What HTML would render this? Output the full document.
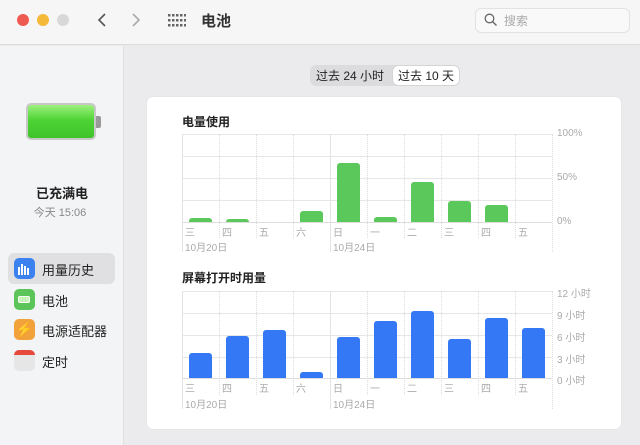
<!DOCTYPE html>
<html><head><meta charset="utf-8"><style>
*{margin:0;padding:0;box-sizing:border-box}
body{width:640px;height:445px;overflow:hidden;background:#ebebed;font-family:"Liberation Sans","Noto Sans CJK SC",sans-serif;position:relative;color:#222}
.a{position:absolute}
.t{font-size:10px;color:#aaa;white-space:nowrap}
.h{height:1px;background:#e6e6e6;left:182px;width:370px}
.v{width:0;border-left:1px dotted #ddd}
.g{background:#5ac85a;border-radius:3px 3px 0 0;width:23px}
.b{background:#3478f6;border-radius:3px 3px 0 0;width:23px}
</style></head><body>
<div class="a" style="left:0;top:0;width:640px;height:45px;background:#f6f6f7;border-bottom:1px solid #dcdcdc"></div>
<div class="a" style="left:17px;top:14px;width:12px;height:12px;border-radius:50%;background:#ee5a52"></div>
<div class="a" style="left:37px;top:14px;width:12px;height:12px;border-radius:50%;background:#f5b93a"></div>
<div class="a" style="left:57px;top:14px;width:12px;height:12px;border-radius:50%;background:#d8d8d8"></div>
<svg class="a" style="left:95px;top:12px" width="50" height="16"><path d="M10 2L4 8L10 14" stroke="#555" stroke-width="1.6" fill="none"/><path d="M38 2L44 8L38 14" stroke="#aaa" stroke-width="1.6" fill="none"/></svg>
<svg class="a" style="left:168px;top:14px" width="18" height="13" fill="#666"><g>
<rect x="0" y="0" width="2.5" height="2.5"/><rect x="4" y="0" width="2.5" height="2.5"/><rect x="8" y="0" width="2.5" height="2.5"/><rect x="12" y="0" width="2.5" height="2.5"/><rect x="16" y="0" width="2.5" height="2.5"/>
<rect x="0" y="5" width="2.5" height="2.5"/><rect x="4" y="5" width="2.5" height="2.5"/><rect x="8" y="5" width="2.5" height="2.5"/><rect x="12" y="5" width="2.5" height="2.5"/><rect x="16" y="5" width="2.5" height="2.5"/>
<rect x="0" y="10" width="2.5" height="2.5"/><rect x="4" y="10" width="2.5" height="2.5"/><rect x="8" y="10" width="2.5" height="2.5"/><rect x="12" y="10" width="2.5" height="2.5"/><rect x="16" y="10" width="2.5" height="2.5"/></g></svg>
<div class="a" style="left:201px;top:10px;font-size:15px;font-weight:bold;color:#333">电池</div>
<div class="a" style="left:475px;top:8px;width:155px;height:25px;border:1px solid #e2e2e2;border-radius:6px;background:#f9f9f9"></div>
<svg class="a" style="left:484px;top:13px" width="14" height="14"><circle cx="5.5" cy="5.5" r="4.3" stroke="#666" stroke-width="1.3" fill="none"/><path d="M8.7 8.7L12.5 12.5" stroke="#666" stroke-width="1.4"/></svg>
<div class="a" style="left:504px;top:12px;font-size:12px;color:#aaa">搜索</div>

<div class="a" style="left:0;top:46px;width:124px;height:399px;background:#f3f4f5;border-right:1px solid #e0e0e0"></div>
<div class="a" style="left:26px;top:103px;width:70px;height:37px;border-radius:5px;background:linear-gradient(#9ef07e,#4fd436 45%,#3ec42a);border:2px solid #c8c8c8"></div>
<div class="a" style="left:96px;top:116px;width:5px;height:12px;background:#999;border-radius:0 2px 2px 0"></div>
<div class="a" style="left:0;width:124px;top:183px;text-align:center;font-size:13px;font-weight:bold">已充满电</div>
<div class="a" style="left:0;width:120px;top:204px;text-align:center;font-size:11px;color:#888">今天 15:06</div>
<div class="a" style="left:8px;top:253px;width:107px;height:31px;border-radius:6px;background:#e0e0e2"></div>
<div class="a" style="left:14px;top:258px;width:21px;height:21px;border-radius:5px;background:#3b82f0"></div>
<svg class="a" style="left:17px;top:262px" width="15" height="13" fill="#fff"><rect x="1" y="5" width="2" height="8"/><rect x="4" y="2" width="2" height="11"/><rect x="7" y="4" width="2" height="9"/><rect x="10" y="6" width="2" height="7"/></svg>
<div class="a" style="left:14px;top:289px;width:21px;height:21px;border-radius:5px;background:#5cc55a"></div>
<div class="a" style="left:18px;top:296px;width:12px;height:7px;border:1.5px solid #fff;border-radius:2px;background:#c8f5b8"></div>
<div class="a" style="left:14px;top:319px;width:21px;height:21px;border-radius:5px;background:#f2a23a;color:#fff;font-size:14px;text-align:center;line-height:21px">⚡</div>
<div class="a" style="left:14px;top:350px;width:21px;height:21px;border-radius:5px;background:#e6e6e6;border-top:5px solid #e6483c"></div>
<div class="a" style="left:42px;top:260px;font-size:13px">用量历史</div>
<div class="a" style="left:42px;top:291px;font-size:13px">电池</div>
<div class="a" style="left:42px;top:321px;font-size:13px">电源适配器</div>
<div class="a" style="left:42px;top:352px;font-size:13px">定时</div>

<div class="a" style="left:310px;top:65px;width:150px;height:21px;border-radius:6px;background:#dcdcde"></div>
<div class="a" style="left:393px;top:66px;width:66px;height:19px;border-radius:5px;background:#fff;box-shadow:0 0 1px #aaa"></div>
<div class="a" style="left:316px;top:67px;font-size:12px">过去 24 小时</div>
<div class="a" style="left:398px;top:67px;font-size:12px">过去 10 天</div>

<div class="a" style="left:147px;top:97px;width:474px;height:332px;background:#fff;border-radius:6px;box-shadow:0 0 1px #ccc"></div>
<div class="a" style="left:182px;top:113px;font-size:12px;font-weight:bold">电量使用</div>
<div class="a" style="left:182px;top:269px;font-size:12px;font-weight:bold">屏幕打开时用量</div>

<!-- chart1 grid -->
<div class="a h" style="top:134px"></div><div class="a h" style="top:156px"></div><div class="a h" style="top:178px"></div><div class="a h" style="top:200px"></div><div class="a h" style="top:222px;background:#ddd"></div>
<div class="a h" style="top:291px"></div><div class="a h" style="top:313px"></div><div class="a h" style="top:335px"></div><div class="a h" style="top:357px"></div><div class="a h" style="top:378px;background:#ddd"></div>
<div class="a v" style="left:182px;top:134px;height:118px;border-left:1px solid #e3e3e3"></div>
<div class="a v" style="left:219px;top:134px;height:104px"></div>
<div class="a v" style="left:256px;top:134px;height:104px"></div>
<div class="a v" style="left:293px;top:134px;height:104px"></div>
<div class="a v" style="left:330px;top:134px;height:118px;border-left:1px solid #e3e3e3"></div>
<div class="a v" style="left:367px;top:134px;height:104px"></div>
<div class="a v" style="left:404px;top:134px;height:104px"></div>
<div class="a v" style="left:441px;top:134px;height:104px"></div>
<div class="a v" style="left:478px;top:134px;height:104px"></div>
<div class="a v" style="left:515px;top:134px;height:104px"></div>
<div class="a v" style="left:552px;top:134px;height:118px"></div>
<div class="a v" style="left:182px;top:291px;height:118px;border-left:1px solid #e3e3e3"></div>
<div class="a v" style="left:219px;top:291px;height:104px"></div>
<div class="a v" style="left:256px;top:291px;height:104px"></div>
<div class="a v" style="left:293px;top:291px;height:104px"></div>
<div class="a v" style="left:330px;top:291px;height:118px;border-left:1px solid #e3e3e3"></div>
<div class="a v" style="left:367px;top:291px;height:104px"></div>
<div class="a v" style="left:404px;top:291px;height:104px"></div>
<div class="a v" style="left:441px;top:291px;height:104px"></div>
<div class="a v" style="left:478px;top:291px;height:104px"></div>
<div class="a v" style="left:515px;top:291px;height:104px"></div>
<div class="a v" style="left:552px;top:291px;height:118px"></div>

<!-- bars1 -->
<div class="a g" style="left:189px;top:218px;height:4px"></div>
<div class="a g" style="left:226px;top:219px;height:3px"></div>
<div class="a g" style="left:300px;top:211px;height:11px"></div>
<div class="a g" style="left:337px;top:163px;height:59px"></div>
<div class="a g" style="left:374px;top:217px;height:5px"></div>
<div class="a g" style="left:411px;top:182px;height:40px"></div>
<div class="a g" style="left:448px;top:201px;height:21px"></div>
<div class="a g" style="left:485px;top:205px;height:17px"></div>
<!-- bars2 -->
<div class="a b" style="left:189px;top:353px;height:25px"></div>
<div class="a b" style="left:226px;top:336px;height:42px"></div>
<div class="a b" style="left:263px;top:330px;height:48px"></div>
<div class="a b" style="left:300px;top:372px;height:6px"></div>
<div class="a b" style="left:337px;top:337px;height:41px"></div>
<div class="a b" style="left:374px;top:321px;height:57px"></div>
<div class="a b" style="left:411px;top:311px;height:67px"></div>
<div class="a b" style="left:448px;top:339px;height:39px"></div>
<div class="a b" style="left:485px;top:318px;height:60px"></div>
<div class="a b" style="left:522px;top:328px;height:50px"></div>

<!-- labels -->
<div class="a t" style="left:557px;top:128px">100%</div>
<div class="a t" style="left:557px;top:172px">50%</div>
<div class="a t" style="left:557px;top:216px">0%</div>
<div class="a t" style="left:557px;top:285px">12 小时</div>
<div class="a t" style="left:557px;top:307px">9 小时</div>
<div class="a t" style="left:557px;top:329px">6 小时</div>
<div class="a t" style="left:557px;top:351px">3 小时</div>
<div class="a t" style="left:557px;top:372px">0 小时</div>

<div class="a t" style="left:185px;top:224px">三</div><div class="a t" style="left:222px;top:224px">四</div><div class="a t" style="left:259px;top:224px">五</div><div class="a t" style="left:296px;top:224px">六</div><div class="a t" style="left:333px;top:224px">日</div><div class="a t" style="left:370px;top:224px">一</div><div class="a t" style="left:407px;top:224px">二</div><div class="a t" style="left:444px;top:224px">三</div><div class="a t" style="left:481px;top:224px">四</div><div class="a t" style="left:518px;top:224px">五</div>
<div class="a t" style="left:185px;top:239px">10月20日</div><div class="a t" style="left:333px;top:239px">10月24日</div>
<div class="a t" style="left:185px;top:380px">三</div><div class="a t" style="left:222px;top:380px">四</div><div class="a t" style="left:259px;top:380px">五</div><div class="a t" style="left:296px;top:380px">六</div><div class="a t" style="left:333px;top:380px">日</div><div class="a t" style="left:370px;top:380px">一</div><div class="a t" style="left:407px;top:380px">二</div><div class="a t" style="left:444px;top:380px">三</div><div class="a t" style="left:481px;top:380px">四</div><div class="a t" style="left:518px;top:380px">五</div>
<div class="a t" style="left:185px;top:396px">10月20日</div><div class="a t" style="left:333px;top:396px">10月24日</div>
</body></html>
